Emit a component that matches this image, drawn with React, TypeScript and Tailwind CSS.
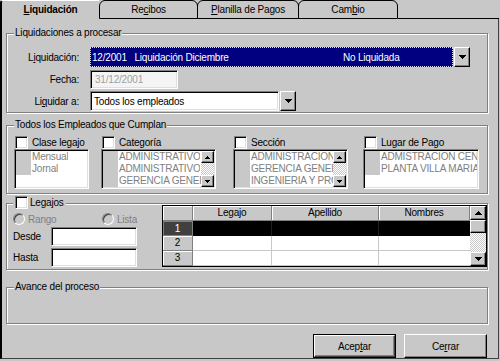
import type { ReactNode } from "react";

const raised =
  "bg-[#c8c8c8] border border-t-white border-l-white border-r-black border-b-black shadow-[inset_-1px_-1px_0_#808080]";
const sunken =
  "border border-t-[#808080] border-l-[#808080] border-r-white border-b-white shadow-[inset_1px_1px_0_#000,inset_-1px_-1px_0_#dfdfdf]";
const checker =
  "bg-[image:repeating-conic-gradient(#c8c8c8_0%_25%,#ffffff_0%_50%)] bg-[length:2px_2px]";

// pixel triangle, rows of 7,5,3,1 (or 5,3,1)
function Tri({ up = false, w = 7 }: { up?: boolean; w?: number }) {
  const h = Math.ceil(w / 2);
  const rows = [];
  for (let i = 0; i < h; i++) {
    const y = up ? h - 1 - i : i;
    rows.push(`M${i} ${y}h${w - 2 * i}v1H${i}z`);
  }
  return (
    <svg width={w} height={h} viewBox={`0 0 ${w} ${h}`} shapeRendering="crispEdges" className="block">
      <path d={rows.join(" ")} fill="#000" />
    </svg>
  );
}

function Check() {
  return <span className={`block h-[13px] w-[13px] shrink-0 bg-white ${sunken}`} />;
}

function Radio() {
  return (
    <span className="block h-[12px] w-[12px] shrink-0 rounded-full border border-t-[#808080] border-l-[#808080] border-r-white border-b-white bg-[#c8c8c8] shadow-[inset_1px_1px_0_#404040]" />
  );
}

function Group({
  legend,
  legendClass,
  className,
  children,
}: {
  legend: ReactNode;
  legendClass: string;
  className: string;
  children?: ReactNode;
}) {
  return (
    <div
      className={`relative ml-[4px] w-[482px] shrink-0 border border-[#808080] shadow-[inset_1px_1px_0_#fff,1px_1px_0_#fff] ${className}`}
    >
      <div className={`absolute flex items-center bg-[#c8c8c8] leading-[12px] ${legendClass}`}>{legend}</div>
      {children}
    </div>
  );
}

function ListBox({ items, scroll, className }: { items: string[]; scroll?: boolean; className: string }) {
  return (
    <div className={`flex h-[40px] bg-white p-px ${sunken} ${className}`}>
      <div className="flex min-w-0 flex-1 flex-col">
        {items.map((it, i) => (
          <div key={i} className="flex h-[12px] leading-[12px]">
            <span className="w-[15px] shrink-0 bg-[#c8c8c8]" />
            <span className="overflow-hidden whitespace-nowrap pl-[1px] text-[#808080]">{it}</span>
          </div>
        ))}
      </div>
      {scroll && (
        <div className="flex w-[13px] flex-col">
          <div className={`flex h-[12px] items-center justify-center ${raised}`}>
            <Tri up w={5} />
          </div>
          <div className={`flex-1 ${checker}`} />
          <div className={`flex h-[12px] items-center justify-center ${raised}`}>
            <Tri w={5} />
          </div>
        </div>
      )}
    </div>
  );
}

function HeadCell({ w, children }: { w: string; children?: ReactNode }) {
  return (
    <div
      className={`${w} flex shrink-0 items-center justify-center border-r border-b border-[#808080] bg-[#c8c8c8] leading-[14px] shadow-[inset_1px_1px_0_#fff]`}
    >
      {children}
    </div>
  );
}

const criteria = [
  { label: "Clase legajo", w: "w-[75px]", ml: "", items: ["Mensual", "Jornal"], scroll: false },
  {
    label: "Categoría",
    w: "w-[115px]",
    ml: "ml-[12px]",
    items: ["ADMINISTRATIVO", "ADMINISTRATIVO", "GERENCIA GENERAL"],
    scroll: true,
  },
  {
    label: "Sección",
    w: "w-[115px]",
    ml: "ml-[17px]",
    items: ["ADMINISTRACION", "GERENCIA GENERAL", "INGENIERIA Y PRODUCCION"],
    scroll: true,
  },
  {
    label: "Lugar de Pago",
    w: "w-[116px]",
    ml: "ml-[15px]",
    items: ["ADMISTRACION CENTRAL", "PLANTA VILLA MARIA"],
    scroll: false,
  },
];

export default function App() {
  return (
    <div className="h-[361px] w-[500px] overflow-hidden bg-[#c8c8c8] font-['Liberation_Sans',Arial,sans-serif] text-[10px] tracking-[-0.2px] text-black">
      {/* Tabs */}
      <div className="flex h-[19px] w-[499px]">
        <div className="flex w-[99px] items-center justify-center rounded-tl-[3px] border-t border-l-2 border-t-white border-l-black font-bold leading-[12px]">
          <span>
            <u>L</u>iquidación
          </span>
        </div>
        <div className="flex w-[99px] items-center justify-center rounded-t-[6px] border border-black leading-[12px]">
          <span>
            Re<u>c</u>ibos
          </span>
        </div>
        <div className="-ml-px flex w-[102px] items-center justify-center rounded-t-[6px] border border-black leading-[12px]">
          <span>
            <u>P</u>lanilla de Pagos
          </span>
        </div>
        <div className="-ml-px flex w-[100px] items-center justify-center rounded-t-[6px] border border-black leading-[12px]">
          <span>
            Cam<u>b</u>io
          </span>
        </div>
        <div className="flex-1 border-b border-black" />
      </div>

      {/* Panel */}
      <div className="flex h-[340px] w-[499px] flex-col border-b border-l-2 border-r border-b-[#404040] border-l-black border-r-[#404040]">
        <Group
          className="mt-[14px] h-[80px] pt-[13px]"
          legendClass="-top-[7px] left-[7px] px-[1px]"
          legend="Liquidaciones a procesar"
        >
          <div className="flex h-[20px] items-center">
            <div className="w-[72px] text-right">
              L<u>i</u>quidación:
            </div>
            <div className="ml-[11px] flex h-[20px] w-[363px] items-center whitespace-pre border border-dotted border-[#d8d8f0] bg-[#000080] pl-[1px] text-white">
              <span className="w-[251px]">12/2001   Liquidación Diciembre</span>
              <span>No Liquidada</span>
            </div>
            <div className={`ml-[1px] flex h-[20px] w-[16px] items-center justify-center ${raised}`}>
              <Tri />
            </div>
          </div>
          <div className="mt-[3px] flex h-[19px] items-center">
            <div className="w-[72px] text-right">Fecha:</div>
            <div className={`ml-[11px] flex h-[19px] w-[88px] items-center bg-[#f4f4f4] pl-[4px] text-[#a0a0a0] ${sunken}`}>
              31/12/2001
            </div>
          </div>
          <div className="mt-[2px] flex h-[20px] items-center">
            <div className="w-[72px] text-right">
              Li<u>q</u>uidar a:
            </div>
            <div className={`ml-[11px] flex h-[20px] w-[189px] items-center bg-white pl-[3px] ${sunken}`}>
              Todos los empleados
            </div>
            <div className={`ml-[1px] flex h-[20px] w-[16px] items-center justify-center ${raised}`}>
              <Tri />
            </div>
          </div>
        </Group>

        <Group
          className="mt-[12px] h-[69px] pt-[10px] pl-[7px]"
          legendClass="-top-[7px] left-[7px] px-[1px]"
          legend="Todos los Empleados que Cumplan"
        >
          <div className="flex">
            {criteria.map((c) => (
              <div key={c.label} className={`flex shrink-0 flex-col ${c.w} ${c.ml}`}>
                <div className="flex h-[13px] items-center gap-[4px] pl-[1px]">
                  <Check />
                  <span>{c.label}</span>
                </div>
                <ListBox items={c.items} scroll={c.scroll} className="" />
              </div>
            ))}
          </div>
        </Group>

        <Group
          className="mt-[9px] flex h-[67px] pt-[1px] pl-[6px]"
          legendClass="-top-[8px] left-[6px] gap-[2px] px-[2px] h-[13px]"
          legend={
            <>
              <Check />
              <span>Legajos</span>
            </>
          }
        >
          <div className="flex w-[124px] shrink-0 flex-col pt-[8px]">
            <div className="flex h-[12px] items-center text-[#808080]">
              <div className="flex w-[102px] items-center gap-[3px]">
                <Radio />
                <span>Rango</span>
              </div>
              <div className="flex items-center gap-[3px]">
                <Radio />
                <span>Lista</span>
              </div>
            </div>
            <div className="mt-[2px] flex h-[19px] items-center">
              <span className="w-[38px]">Desde</span>
              <div className={`h-[19px] w-[86px] bg-white ${sunken}`} />
            </div>
            <div className="mt-[2px] flex h-[19px] items-center">
              <span className="w-[38px]">Hasta</span>
              <div className={`h-[19px] w-[86px] bg-white ${sunken}`} />
            </div>
          </div>

          {/* grid */}
          <div className="ml-[25px] flex h-[62px] w-[325px] shrink-0 border border-black bg-white">
            <div className="flex w-[307px] flex-col">
              <div className="flex h-[15px]">
                <HeadCell w="w-[30px]" />
                <HeadCell w="w-[79px]">Legajo</HeadCell>
                <HeadCell w="w-[107px]">Apellido</HeadCell>
                <HeadCell w="w-[91px]">Nombres</HeadCell>
              </div>
              <div className="flex h-[15px]">
                <div className="flex w-[30px] items-center justify-center border-r border-b border-[#808080] bg-[#404040] text-white shadow-[inset_1px_1px_0_#808080]">
                  1
                </div>
                <div className="w-[79px] border-r border-[#202020] bg-black" />
                <div className="w-[107px] border-r border-[#202020] bg-black" />
                <div className="w-[91px] bg-black" />
              </div>
              {["2", "3"].map((n) => (
                <div key={n} className="flex h-[15px]">
                  <HeadCell w="w-[30px]">{n}</HeadCell>
                  <div className="w-[79px] border-r border-b border-[#c8c8c8]" />
                  <div className="w-[107px] border-r border-b border-[#c8c8c8]" />
                  <div className="w-[91px] border-b border-[#c8c8c8]" />
                </div>
              ))}
            </div>
            <div className="flex w-[16px] flex-col">
              <div className={`flex h-[14px] items-center justify-center ${raised}`}>
                <Tri up />
              </div>
              <div className={`h-[13px] ${raised}`} />
              <div className={`flex-1 ${checker}`} />
              <div className={`flex h-[14px] items-center justify-center ${raised}`}>
                <Tri />
              </div>
            </div>
          </div>
        </Group>

        <Group
          className="mt-[17px] h-[37px]"
          legendClass="-top-[7px] left-[7px] px-[1px]"
          legend="Avance del proceso"
        />

        <div className="mt-[10px] flex h-[24px] justify-end gap-[8px] pr-[11px]">
          <div className="flex w-[83px] border border-black">
            <div className="flex flex-1 items-center justify-center border border-t-white border-l-white border-r-[#404040] border-b-[#404040] bg-[#c8c8c8] shadow-[inset_-1px_-1px_0_#808080]">
              <span>
                Acep<u>t</u>ar
              </span>
            </div>
          </div>
          <div className={`flex w-[83px] items-center justify-center ${raised}`}>
            <span>
              Ce<u>r</u>rar
            </span>
          </div>
        </div>
      </div>
    </div>
  );
}
